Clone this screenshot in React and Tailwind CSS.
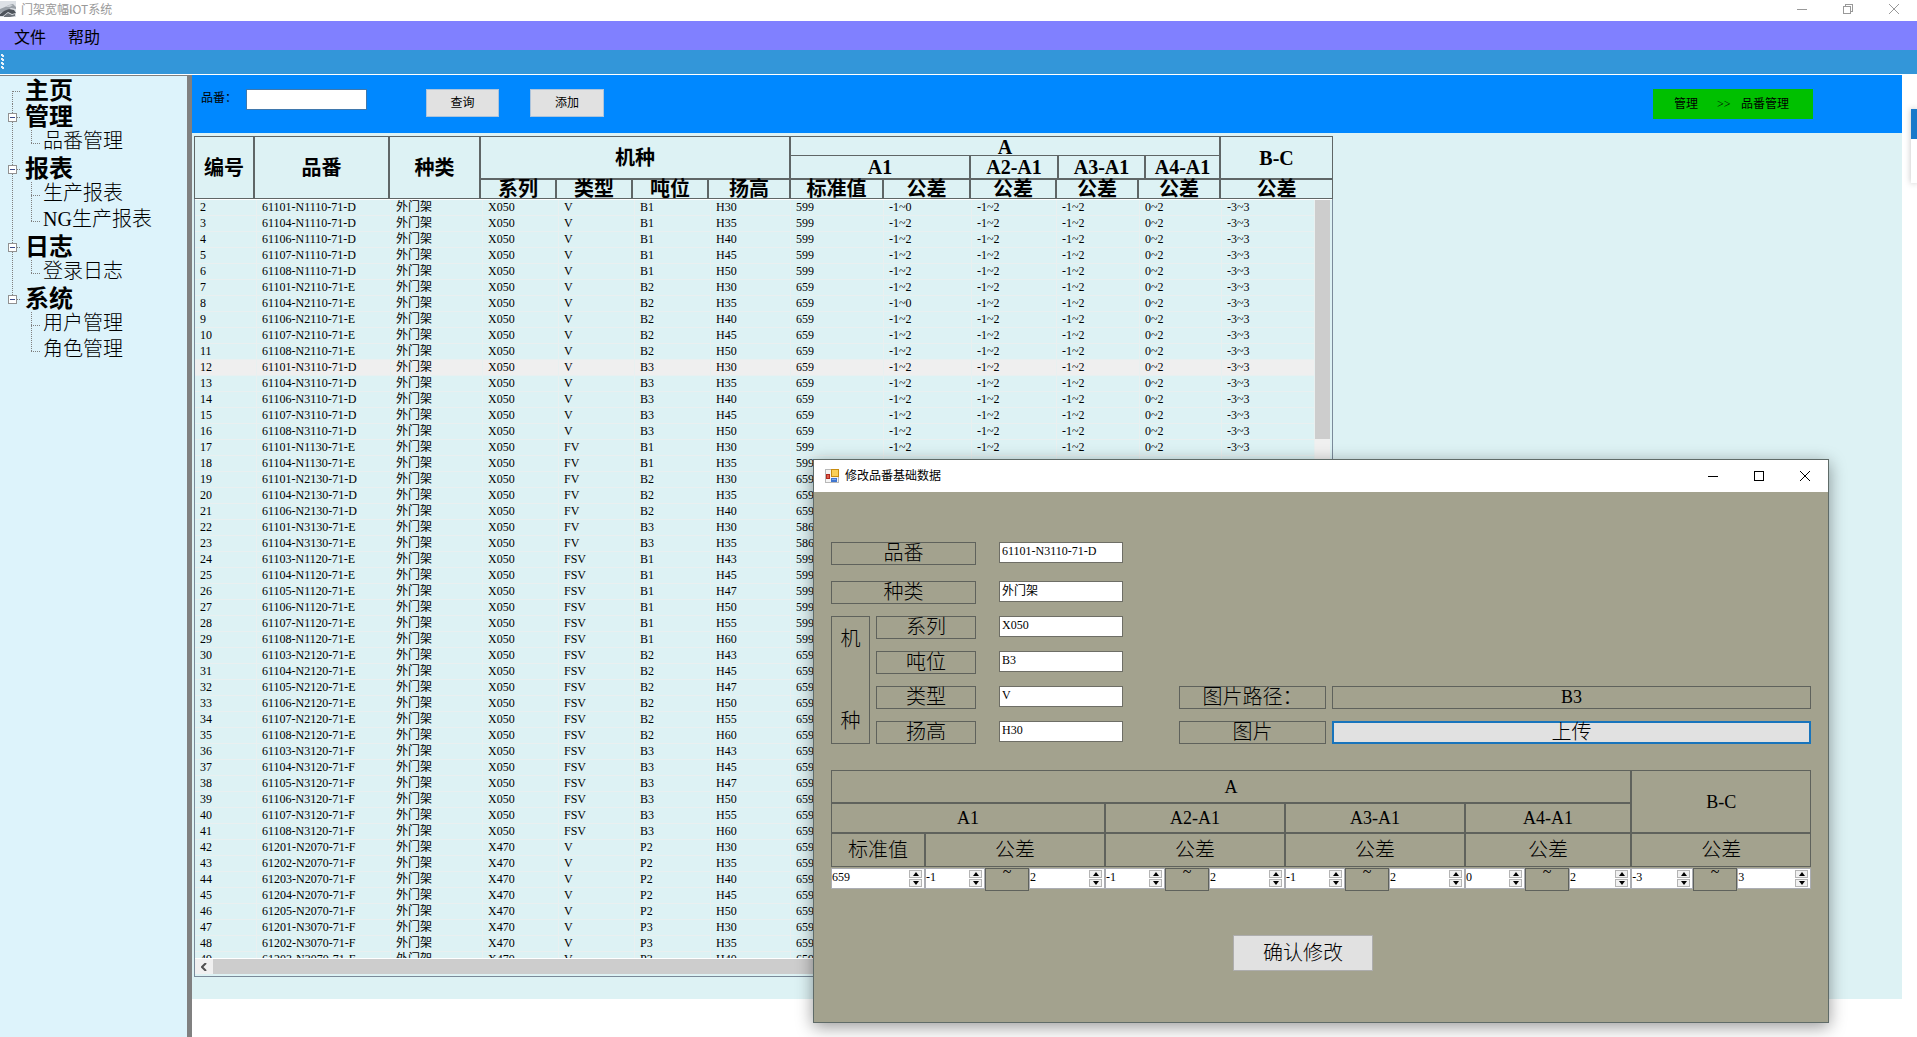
import React from 'react';

const menuTree = [
    { title: '主页', children: [] },
    { title: '管理', children: ['品番管理'] },
    { title: '报表', children: ['生产报表', 'NG生产报表'] },
    { title: '日志', children: ['登录日志'] },
    { title: '系统', children: ['用户管理', '角色管理'] },
];

// [first id, code suffix, series, type, tonnage, standard value, [code prefix, lift] ...]
const groups = [
    [2, 'N1110-71-D', 'X050', 'V', 'B1', 599, [['61101', 'H30'], ['61104', 'H35'], ['61106', 'H40'], ['61107', 'H45'], ['61108', 'H50']]],
    [7, 'N2110-71-E', 'X050', 'V', 'B2', 659, [['61101', 'H30'], ['61104', 'H35'], ['61106', 'H40'], ['61107', 'H45'], ['61108', 'H50']]],
    [12, 'N3110-71-D', 'X050', 'V', 'B3', 659, [['61101', 'H30'], ['61104', 'H35'], ['61106', 'H40'], ['61107', 'H45'], ['61108', 'H50']]],
    [17, 'N1130-71-E', 'X050', 'FV', 'B1', 599, [['61101', 'H30'], ['61104', 'H35']]],
    [19, 'N2130-71-D', 'X050', 'FV', 'B2', 659, [['61101', 'H30'], ['61104', 'H35'], ['61106', 'H40']]],
    [22, 'N3130-71-E', 'X050', 'FV', 'B3', 586, [['61101', 'H30'], ['61104', 'H35']]],
    [24, 'N1120-71-E', 'X050', 'FSV', 'B1', 599, [['61103', 'H43'], ['61104', 'H45'], ['61105', 'H47'], ['61106', 'H50'], ['61107', 'H55'], ['61108', 'H60']]],
    [30, 'N2120-71-E', 'X050', 'FSV', 'B2', 659, [['61103', 'H43'], ['61104', 'H45'], ['61105', 'H47'], ['61106', 'H50'], ['61107', 'H55'], ['61108', 'H60']]],
    [36, 'N3120-71-F', 'X050', 'FSV', 'B3', 659, [['61103', 'H43'], ['61104', 'H45'], ['61105', 'H47'], ['61106', 'H50'], ['61107', 'H55'], ['61108', 'H60']]],
    [42, 'N2070-71-F', 'X470', 'V', 'P2', 659, [['61201', 'H30'], ['61202', 'H35'], ['61203', 'H40'], ['61204', 'H45'], ['61205', 'H50']]],
    [47, 'N3070-71-F', 'X470', 'V', 'P3', 659, [['61201', 'H30'], ['61202', 'H35'], ['61203', 'H40']]],
];

const rows = groups.flatMap(([start, suffix, series, type, ton, std, items]) =>
    items.map(([prefix, lift], i) => {
        const id = start + i;
        return [id, `${prefix}-${suffix}`, '外门架', series, type, ton, lift, std, id === 2 || id === 8 ? '-1~0' : '-1~2', '-1~2', '-1~2', '0~2', '-3~3'];
    })
);

function TreeRow({ root, label, open, first, last, lastGroup }) {
    return (
        <div className="flex h-[26px] items-center whitespace-nowrap">
            <svg width={root ? 25 : 43} height="26" className="shrink-0" fill="none" stroke="#808080" shapeRendering="crispEdges">
                {root && <path d={`M12.5 ${first ? 13 : 0}V${lastGroup ? 13 : 26}M13 13.5H21`} strokeDasharray="1 1" />}
                {!root && !lastGroup && <path d="M12.5 0V26" strokeDasharray="1 1" />}
                {!root && <path d={`M31.5 0V${last ? 13 : 26}M31 13.5H40`} strokeDasharray="1 1" />}
                {open && <rect x="8.5" y="9.5" width="8" height="8" fill="#fff" stroke="#919191" />}
                {open && <path d="M10 13.5H15" stroke="#3c4c8c" />}
            </svg>
            <a href="#" className={root ? 'text-2xl leading-[26px] font-bold' : 'pb-1 text-xl leading-[22px] font-light'}>{label}</a>
        </div>
    );
}

function Sidebar() {
    return (
        <nav className="w-[192px] shrink-0 border-t border-r-[5px] border-[#808080] bg-[#ddf3fb] pt-[2px]">
            {menuTree.map((group, g) => {
                const lastGroup = g === menuTree.length - 1;
                return (
                    <div key={group.title}>
                        <TreeRow root label={group.title} open={group.children.length > 0} first={g === 0} lastGroup={lastGroup} />
                        {group.children.map((label, i) => (
                            <TreeRow key={label} label={label} last={i === group.children.length - 1} lastGroup={lastGroup} />
                        ))}
                    </div>
                );
            })}
        </nav>
    );
}

function WindowButtons({ className, restore }) {
    return (
        <div className={`flex ${className}`}>
            <button aria-label="最小化" className="flex w-[46px] items-center justify-center">
                <svg width="10" height="10" stroke="currentColor" shapeRendering="crispEdges"><path d="M0 5.5H10" /></svg>
            </button>
            <button aria-label="最大化" className="flex w-[46px] items-center justify-center">
                <svg width="10" height="10" fill="none" stroke="currentColor" shapeRendering="crispEdges">
                    {restore ? <path d="M.5 2.5H7.5V9.5H.5ZM2.5 2.5V.5H9.5V7.5H7.5" /> : <path d="M.5 .5H9.5V9.5H.5Z" />}
                </svg>
            </button>
            <button aria-label="关闭" className="flex w-[46px] items-center justify-center">
                <svg width="10" height="10" stroke="currentColor"><path d="M0 0L10 10M10 0L0 10" /></svg>
            </button>
        </div>
    );
}

function Th({ children, low, ...rest }) {
    return (
        <th {...rest} className="border border-[#5f6666] p-0 text-xl font-bold">
            <div className={low ? 'h-[18px] leading-[18px]' : 'leading-[22px]'}>{children}</div>
        </th>
    );
}

function PartTable() {
    return (
        <div className="mt-[3px] ml-[2px] w-[1139px]">
            <table className="w-full table-fixed border-separate border-spacing-0">
                <colgroup>
                    {[60, 135, 91, 76, 76, 76, 82, 93, 87, 86, 2, 80, 7, 75, 113].map((w, i) => <col key={i} style={{ width: w }} />)}
                </colgroup>
                <thead>
                    <tr className="h-[19px]">
                        <Th rowSpan={3}>编号</Th>
                        <Th rowSpan={3}>品番</Th>
                        <Th rowSpan={3}>种类</Th>
                        <Th rowSpan={2} colSpan={4}>机种</Th>
                        <th colSpan={7} className="border border-b-0 border-[#5f6666] p-0 text-xl font-bold">
                            <div className="h-[18px] leading-[20px]">A</div>
                        </th>
                        <Th rowSpan={2}>B-C</Th>
                    </tr>
                    <tr className="h-[24px]">
                        <Th colSpan={2}>A1</Th>
                        <Th colSpan={2}>A2-A1</Th>
                        <Th colSpan={2}>A3-A1</Th>
                        <Th>A4-A1</Th>
                    </tr>
                    <tr className="h-[20px]">
                        <Th low>系列</Th>
                        <Th low>类型</Th>
                        <Th low>吨位</Th>
                        <Th low>扬高</Th>
                        <Th low>标准值</Th>
                        <Th low>公差</Th>
                        <Th low>公差</Th>
                        <Th low colSpan={2}>公差</Th>
                        <Th low colSpan={2}>公差</Th>
                        <Th low>公差</Th>
                    </tr>
                </thead>
            </table>
            <div className="border-x border-b border-[#7a8a99] pb-[2px]">
                <div className="flex h-[760px] overflow-hidden border-y border-white">
                    <table className="h-fit w-[1120px] shrink-0 table-fixed border-separate border-spacing-0 text-xs leading-[15px]">
                        <colgroup>
                            {[62, 134, 92, 76, 76, 76, 80, 93, 88, 85, 83, 82, 93].map((w, i) => <col key={i} style={{ width: w }} />)}
                        </colgroup>
                        <tbody>
                            {rows.map((row) => (
                                <tr key={row[0]} className={row[0] === 12 ? 'bg-[#efefef]' : ''}>
                                    {row.map((cell, i) => (
                                        <td key={i} className="h-4 overflow-hidden border-r border-b border-[#e9f0f0] py-0 pr-0 pl-[5px] whitespace-nowrap">
                                            <div className="h-[15px]">{cell}</div>
                                        </td>
                                    ))}
                                </tr>
                            ))}
                        </tbody>
                    </table>
                    <div className="w-[15px] bg-[#f0f0f0]">
                        <div className="h-[239px] bg-[#cdcdcd]" />
                    </div>
                </div>
                <div className="flex h-[15px] bg-[#cdcdcd]">
                    <button aria-label="向左滚动" className="flex w-[18px] items-center justify-center bg-[#f0f0f0]">
                        <svg width="6" height="8" fill="none" stroke="#505050" strokeWidth="2"><path d="M5 0L1 4L5 8" /></svg>
                    </button>
                </div>
            </div>
        </div>
    );
}

function FormRow({ id, label, value, labelClass }) {
    return (
        <div className="flex h-[23px] items-start gap-[23px]">
            <label htmlFor={id} className={`h-[23px] border border-[#5f625c] text-center text-xl leading-[21px] font-light ${labelClass}`}>{label}</label>
            <input id={id} defaultValue={value} className="h-[21px] w-[124px] border border-[#6e6e66] bg-white px-[2px] pb-[3px] text-xs" />
        </div>
    );
}

function NumberBox({ value, label }) {
    return (
        <div className="flex h-[21px] items-center border border-[#abadb3] bg-white pr-[2px]">
            <input type="number" aria-label={label} defaultValue={value} className="w-0 flex-1 [appearance:textfield] bg-white pb-[3px] text-xs" />
            <div className="flex w-[13px] flex-col gap-px">
                <button aria-label="增加" className="flex h-2 items-center justify-center border border-[#b4b4b4] bg-[#f0f0f0]">
                    <svg width="6" height="4"><path d="M0 4L3 0L6 4Z" /></svg>
                </button>
                <button aria-label="减少" className="flex h-2 items-center justify-center border border-[#b4b4b4] bg-[#f0f0f0]">
                    <svg width="6" height="4"><path d="M0 0L3 4L6 0Z" /></svg>
                </button>
            </div>
        </div>
    );
}

const ranges = [
    ['A1', -1, 2],
    ['A2-A1', -1, 2],
    ['A3-A1', -1, 2],
    ['A4-A1', 0, 2],
    ['B-C', -3, 3],
];

function ToleranceTable() {
    const th = 'border border-[#5f625c] p-0 font-light';
    return (
        <table className="mt-[26px] w-full table-fixed border-separate border-spacing-0">
            <colgroup>
                {[94, 60, 44, 76, 60, 44, 76, 60, 44, 76, 60, 44, 62, 62, 44, 74].map((w, i) => <col key={i} style={{ width: w }} />)}
            </colgroup>
            <thead className="text-lg leading-[24px]">
                <tr className="h-[33px]">
                    <th colSpan={13} className={th}>A</th>
                    <th colSpan={3} rowSpan={2} className={th}>B-C</th>
                </tr>
                <tr className="h-[30px]">
                    <th colSpan={4} className={th}>A1</th>
                    <th colSpan={3} className={th}>A2-A1</th>
                    <th colSpan={3} className={th}>A3-A1</th>
                    <th colSpan={3} className={th}>A4-A1</th>
                </tr>
                <tr className="h-[34px] text-xl">
                    <th className={th}>标准值</th>
                    {ranges.map(([name]) => <th key={name} colSpan={3} className={th}>公差</th>)}
                </tr>
            </thead>
            <tbody>
                <tr className="align-top">
                    <td className="p-0 pt-px"><NumberBox label="标准值" value={659} /></td>
                    {ranges.map(([name, low, high]) => (
                        <React.Fragment key={name}>
                            <td className="p-0 pt-px"><NumberBox label={`${name} 公差下限`} value={low} /></td>
                            <td className="p-0 pt-px">
                                <div className="h-[23px] border border-[#5f625c] text-center text-base leading-[6px]">~</div>
                            </td>
                            <td className="p-0 pt-px"><NumberBox label={`${name} 公差上限`} value={high} /></td>
                        </React.Fragment>
                    ))}
                </tr>
            </tbody>
        </table>
    );
}

function EditDialog() {
    return (
        <div role="dialog" aria-label="修改品番基础数据" className="absolute top-[459px] left-[813px] w-[1016px] border border-[#5f6b68] bg-[#a3a28e] shadow-[0_4px_16px_rgba(0,0,0,0.4)]">
            <div className="flex h-8 justify-between bg-white">
                <div className="flex items-center gap-[6px] pl-[11px] text-xs">
                    <svg width="14" height="14" shapeRendering="crispEdges">
                        <rect x=".5" y=".5" width="13" height="13" fill="#f4f4f4" stroke="#b8b8b8" />
                        <rect x="6" y="0" width="8" height="8" fill="#c98d10" />
                        <rect x="7" y="1" width="6" height="6" fill="#fbd057" />
                        <rect x="1" y="5" width="4" height="5" fill="#b02a20" />
                        <rect x="2" y="6" width="2" height="3" fill="#e05a48" />
                        <rect x="6" y="9" width="6" height="4" fill="#3f76cf" />
                        <rect x="7" y="10" width="4" height="1" fill="#7fa8ea" />
                    </svg>
                    修改品番基础数据
                </div>
                <WindowButtons className="text-black" />
            </div>
            <form className="px-[17px] pt-[50px] pb-[51px]" onSubmit={(e) => e.preventDefault()}>
                <div className="flex items-end gap-14">
                    <div className="flex flex-col gap-3">
                        <div className="flex flex-col gap-4">
                            <FormRow id="part" label="品番" value="61101-N3110-71-D" labelClass="w-[145px]" />
                            <FormRow id="kind" label="种类" value="外门架" labelClass="w-[145px]" />
                        </div>
                        <div className="flex gap-[6px]">
                            <div className="flex w-[39px] flex-col items-center justify-between border border-[#5f625c] py-2 text-xl font-light">
                                <span>机</span>
                                <span>种</span>
                            </div>
                            <div className="flex flex-col gap-3">
                                <FormRow id="series" label="系列" value="X050" labelClass="w-[100px]" />
                                <FormRow id="ton" label="吨位" value="B3" labelClass="w-[100px]" />
                                <FormRow id="type" label="类型" value="V" labelClass="w-[100px]" />
                                <FormRow id="lift" label="扬高" value="H30" labelClass="w-[100px]" />
                            </div>
                        </div>
                    </div>
                    <div className="grid flex-1 grid-cols-[147px_1fr] gap-x-[6px] gap-y-3 text-center text-xl leading-[21px] font-light">
                        <div className="h-[23px] border border-[#5f625c]">图片路径：</div>
                        <div className="h-[23px] border border-[#5f625c] text-lg leading-[21px]">B3</div>
                        <div className="h-[23px] border border-[#5f625c]">图片</div>
                        <button type="button" className="h-[23px] border-2 border-[#1874bc] bg-[#e1e1e1] leading-[19px]">上传</button>
                    </div>
                </div>
                <ToleranceTable />
                <button type="submit" className="mt-11 ml-[402px] h-9 w-[140px] border border-[#adadad] bg-[#e1e1e1] text-xl font-light">确认修改</button>
            </form>
        </div>
    );
}

export default function App() {
    return (
        <div className="relative flex min-h-screen flex-col overflow-hidden bg-white font-['Liberation_Serif','Noto_Sans_CJK_SC',serif] text-black">
            <header className="font-['Noto_Sans_CJK_SC',sans-serif]">
                <div className="flex h-[21px] justify-between pb-[4px] text-[#999]">
                    <div className="flex items-center gap-[5px] text-xs leading-[17px]">
                        <svg width="16" height="16" viewBox="0 0 16 16">
                            <rect width="16" height="16" fill="#dde1e6" />
                            <path d="M0 8L5 6L9 4L13 3L16 6V8L11 7L6 10L0 12Z" fill="#9aa1a8" />
                            <path d="M0 13L4 10L9 8L14 9L16 12L12 13L8 11L3 15H0Z" fill="#4d535a" />
                            <path d="M5 6L9 4L13 4L10 6Z" fill="#c9ced3" />
                            <path d="M4 15L8 12L12 14L15 13V15L10 16H4Z" fill="#6b7178" />
                        </svg>
                        门架宽幅IOT系统
                    </div>
                    <WindowButtons restore className="" />
                </div>
                <div className="flex h-[29px] items-center gap-[22px] bg-[#8080ff] pl-[14px] text-base">
                    <button>文件</button>
                    <button>帮助</button>
                </div>
                <div className="flex h-6 items-center bg-[#3396d9] pl-px">
                    <svg width="3" height="16" fill="#e8f2fa" shapeRendering="crispEdges">
                        {[0, 4, 8, 12].map((y) => <path key={y} d={`M0 ${y}h2v1h1v2h-2v-1h-1z`} />)}
                    </svg>
                </div>
                <div className="h-px bg-white" />
            </header>

            <div className="flex flex-1">
                <Sidebar />
                <main className="mr-[15px] flex-1">
                    <div className="bg-[#ddf2f4] pb-[22px]">
                        <div className="flex h-[58px] items-start justify-between bg-[#08f] pt-[14px] pr-[89px] pl-[9px] text-xs">
                            <div className="flex items-start">
                                <label htmlFor="search" className="w-[45px] leading-[18px]">品番：</label>
                                <input id="search" className="h-[21px] w-[121px] border border-[#3f78ad] bg-white px-1" />
                                <button className="ml-[59px] h-7 w-[73px] border border-[#adc4dc] bg-[#e1e1e1]">查询</button>
                                <button className="ml-[31px] h-7 w-[74px] border border-[#adc4dc] bg-[#e1e1e1]">添加</button>
                            </div>
                            <div className="flex h-[30px] w-[160px] items-center bg-[#00c000] pl-[21px]">
                                <span className="w-[43px]">管理</span>
                                <span className="w-[24px]">&gt;&gt;</span>
                                <span>品番管理</span>
                            </div>
                        </div>
                        <PartTable />
                    </div>
                </main>
            </div>

            {/* sliver of the floating panel docked past the right edge */}
            <div className="absolute top-[109px] right-0 w-[6px] bg-white shadow-[0_0_6px_rgba(0,0,0,0.25)]">
                <div className="h-[30px] bg-[#1979ca]" />
                <div className="h-11" />
            </div>

            <EditDialog />
        </div>
    );
}
